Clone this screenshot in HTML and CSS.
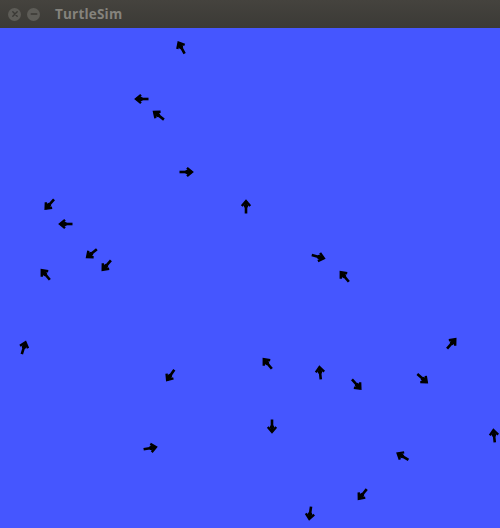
FILE: index.html
```html
<!DOCTYPE html>
<html>
<head>
<meta charset="utf-8">
<title>TurtleSim</title>
<link rel="stylesheet" href="styles.css">
</head>
<body>
<div class="window">
  <header class="titlebar">
    <div class="controls">
      <span class="btn close"><svg viewBox="0 0 12 12" width="12" height="12"><path d="M3.8 3.8 L8.2 8.2 M8.2 3.8 L3.8 8.2" stroke="#3a3935" stroke-width="1.4" stroke-linecap="round"/></svg></span>
      <span class="btn min"><svg viewBox="0 0 12 12" width="12" height="12"><path d="M3.3 6 L8.7 6" stroke="#3a3935" stroke-width="1.6" stroke-linecap="round"/></svg></span>
    </div>
    <span class="title">TurtleSim</span>
  </header>
  <main class="canvas" id="canvas">
    <svg width="0" height="0" class="defs">
      <defs>
        <g id="turtle">
          <path d="M7 3.5 L7 13.2" stroke="#000" stroke-width="2.6" stroke-linecap="square"/>
          <path d="M2.8 7 L7 2 L11.2 7" fill="none" stroke="#000" stroke-width="2.4" stroke-linejoin="miter"/>
          <path d="M4.6 6.4 L7 3.4 L9.4 6.4 L8.6 8.6 L5.4 8.6 Z" fill="#000"/>
        </g>
      </defs>
    </svg>
    <svg class="turtle" style="left:174px;top:11.7px;transform:rotate(-29deg)" viewBox="0 0 14 14"><use href="#turtle"/></svg>
    <svg class="turtle" style="left:134px;top:64.3px;transform:rotate(-90deg)" viewBox="0 0 14 14"><use href="#turtle"/></svg>
    <svg class="turtle" style="left:151px;top:79.7px;transform:rotate(-52deg)" viewBox="0 0 14 14"><use href="#turtle"/></svg>
    <svg class="turtle" style="left:179.5px;top:137.3px;transform:rotate(90deg)" viewBox="0 0 14 14"><use href="#turtle"/></svg>
    <svg class="turtle" style="left:239px;top:171.3px;transform:rotate(0deg)" viewBox="0 0 14 14"><use href="#turtle"/></svg>
    <svg class="turtle" style="left:41.8px;top:169.5px;transform:rotate(-138deg)" viewBox="0 0 14 14"><use href="#turtle"/></svg>
    <svg class="turtle" style="left:57.5px;top:188.5px;transform:rotate(-90deg)" viewBox="0 0 14 14"><use href="#turtle"/></svg>
    <svg class="turtle" style="left:83.5px;top:218.7px;transform:rotate(-129deg)" viewBox="0 0 14 14"><use href="#turtle"/></svg>
    <svg class="turtle" style="left:99px;top:231px;transform:rotate(-139deg)" viewBox="0 0 14 14"><use href="#turtle"/></svg>
    <svg class="turtle" style="left:37.5px;top:238.5px;transform:rotate(-40deg)" viewBox="0 0 14 14"><use href="#turtle"/></svg>
    <svg class="turtle" style="left:312.3px;top:222px;transform:rotate(105deg)" viewBox="0 0 14 14"><use href="#turtle"/></svg>
    <svg class="turtle" style="left:336.8px;top:240.7px;transform:rotate(-40deg)" viewBox="0 0 14 14"><use href="#turtle"/></svg>
    <svg class="turtle" style="left:445.3px;top:307.8px;transform:rotate(41deg)" viewBox="0 0 14 14"><use href="#turtle"/></svg>
    <svg class="turtle" style="left:259.5px;top:327.8px;transform:rotate(-40deg)" viewBox="0 0 14 14"><use href="#turtle"/></svg>
    <svg class="turtle" style="left:312.5px;top:337.3px;transform:rotate(-6deg)" viewBox="0 0 14 14"><use href="#turtle"/></svg>
    <svg class="turtle" style="left:350px;top:350.3px;transform:rotate(138deg)" viewBox="0 0 14 14"><use href="#turtle"/></svg>
    <svg class="turtle" style="left:415.8px;top:343.7px;transform:rotate(131deg)" viewBox="0 0 14 14"><use href="#turtle"/></svg>
    <svg class="turtle" style="left:264.5px;top:391.7px;transform:rotate(180deg)" viewBox="0 0 14 14"><use href="#turtle"/></svg>
    <svg class="turtle" style="left:487.3px;top:400.3px;transform:rotate(-6deg)" viewBox="0 0 14 14"><use href="#turtle"/></svg>
    <svg class="turtle" style="left:395.3px;top:420.5px;transform:rotate(-59deg)" viewBox="0 0 14 14"><use href="#turtle"/></svg>
    <svg class="turtle" style="left:355.3px;top:459.5px;transform:rotate(-141deg)" viewBox="0 0 14 14"><use href="#turtle"/></svg>
    <svg class="turtle" style="left:303px;top:479.3px;transform:rotate(188deg)" viewBox="0 0 14 14"><use href="#turtle"/></svg>
    <svg class="turtle" style="left:16.8px;top:312.3px;transform:rotate(17deg)" viewBox="0 0 14 14"><use href="#turtle"/></svg>
    <svg class="turtle" style="left:162.8px;top:340.5px;transform:rotate(-145deg)" viewBox="0 0 14 14"><use href="#turtle"/></svg>
    <svg class="turtle" style="left:144.3px;top:413.3px;transform:rotate(80deg)" viewBox="0 0 14 14"><use href="#turtle"/></svg>
  </main>
</div>
</body>
</html>
```

FILE: styles.css
```css
html, body {
  margin: 0;
  padding: 0;
  background: #3c3b37;
}
.window {
  width: 500px;
  height: 528px;
  display: flex;
  flex-direction: column;
  overflow: hidden;
}
.titlebar {
  height: 28px;
  flex: 0 0 28px;
  display: flex;
  align-items: center;
  background: linear-gradient(#45433e, #3b3a36);
  box-sizing: border-box;
  padding-left: 8px;
}
.controls {
  display: flex;
  gap: 6px;
  align-items: center;
}
.btn {
  width: 13px;
  height: 13px;
  border-radius: 50%;
  background: #5d5c57;
  display: flex;
  align-items: center;
  justify-content: center;
}
.btn svg { display: block; }
.title {
  margin-left: 15px;
  font-family: "Open Sans", "DejaVu Sans", sans-serif;
  font-weight: 700;
  font-size: 13.5px;
  color: #85837d;
  letter-spacing: 0.2px;
}
.canvas {
  position: relative;
  width: 500px;
  height: 500px;
  background: #4556ff;
}
.defs {
  position: absolute;
}
.turtle {
  position: absolute;
  width: 14px;
  height: 14px;
  overflow: visible;
}
```
